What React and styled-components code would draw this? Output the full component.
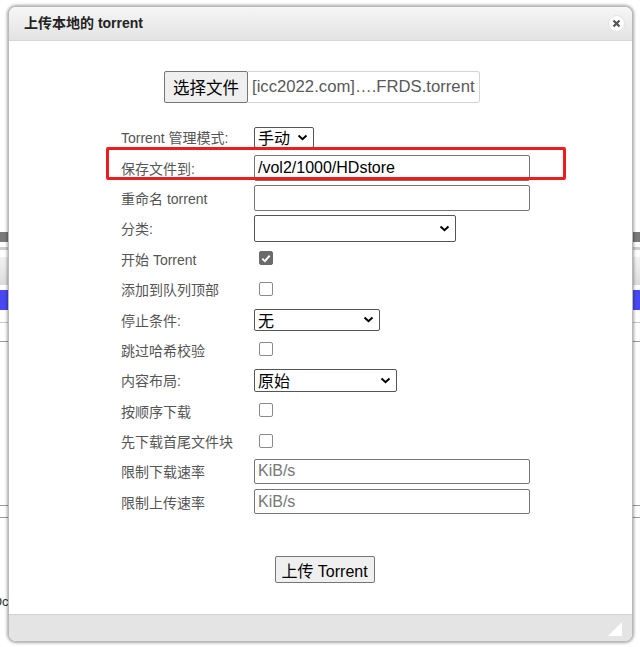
import React from 'react';
import styled, { createGlobalStyle } from 'styled-components';

const GlobalStyle = createGlobalStyle`
    html, body {
        margin: 0;
        padding: 0;
        background: #ffffff;
        overflow: hidden;
    }
    * { box-sizing: border-box; }
`;

const FONT = `"Liberation Sans", Arial, "Noto Sans CJK SC", sans-serif`;

// page behind the dialog
const Page = styled.div`
    position: relative;
    width: 640px;
    height: 647px;
    display: flex;
    flex-direction: column;
    background: #ffffff;
    font-family: ${FONT};`

const Bar = styled.div`
    height: ${p => p.h}px;
    margin-top: ${p => p.mt}px;
    background: ${p => p.bg};`

const BackText = styled.div`
    margin-top: ${p => p.mt}px;
    font-size: 13px;
    color: #333;
    padding-left: 0;
    margin-left: -8px;`

// dialog
const Dialog = styled.div`
    position: absolute;
    left: 8px;
    top: 6px;
    width: 625px;
    height: 636px;
    display: flex;
    flex-direction: column;
    background: #ffffff;
    border: 1px solid #b9b9b9;
    border-radius: 8px;
    box-shadow: 0 0 3px 1px rgba(0,0,0,0.35);
    overflow: hidden;`

const Header = styled.div`
    height: 34px;
    flex-shrink: 0;
    display: flex;
    align-items: center;
    justify-content: space-between;
    padding: 0 7px 3px 15px;
    background: linear-gradient(#f6f6f6, #e3e3e3);
    border-bottom: 1px solid #d6d6d6;`

const Title = styled.h3`
    margin: 0;
    font-size: 14px;
    font-weight: bold;
    color: #222;
    font-family: ${FONT};`

const Close = styled.div`
    width: 17px;
    height: 17px;
    margin-top: 3px;
    border-radius: 50%;
    background: #ffffff;
    border: 1px solid #e2e2e2;
    display: flex;
    align-items: center;
    justify-content: center;`

const Body = styled.div`
    flex: 1;
    display: flex;
    flex-direction: column;
    padding-top: 30px;`

const FileRow = styled.div`
    display: flex;
    justify-content: center;
    padding-left: 3px;`

const FileButton = styled.button`
    height: 32px;
    padding: 0 8px;
    font-size: 16.5px;
    font-family: ${FONT};
    color: #000;
    background: #efefef;
    border: 1px solid #767676;
    border-radius: 2px;
    white-space: nowrap;`

const FileName = styled.div`
    width: 232px;
    height: 32px;
    display: flex;
    align-items: center;
    padding: 0 4px;
    font-size: 16.7px;
    color: #595959;
    border: 1px solid #d4d4d4;
    border-left: 0;
    border-radius: 0 3px 3px 0;
    white-space: nowrap;
    overflow: hidden;`

const Form = styled.div`
    position: relative;
    margin: 19px 0 0 112px;
    display: grid;
    grid-template-columns: 133px auto;
    grid-auto-rows: 30.4px;
    align-items: center;`

const Label = styled.div`
    font-size: 14px;
    color: #555;
    white-space: nowrap;`

const Input = styled.div`
    width: ${p => p.w || 276}px;
    height: ${p => p.h || 26}px;
    display: flex;
    align-items: center;
    padding: 0 3px;
    font-size: 16px;
    color: ${p => (p.placeholder ? '#777' : '#000')};
    border: 1px solid #767676;
    border-radius: 2px;`

const Select = styled.div`
    width: ${p => p.w}px;
    height: ${p => p.h || 22}px;
    display: flex;
    align-items: center;
    justify-content: space-between;
    padding: 0 5px 0 3px;
    font-size: 16px;
    color: #000;
    border: 1px solid #555;
    border-radius: 2px;`

const Check = styled.div`
    width: 14px;
    height: 14px;
    margin-left: 5px;
    margin-top: -1px;
    border-radius: 2px;
    border: 1px solid ${p => (p.on ? '#6b6b6b' : '#8a8a8a')};
    background: ${p => (p.on ? '#6b6b6b' : '#fff')};
    display: flex;
    align-items: center;
    justify-content: center;`

const Highlight = styled.div`
    position: absolute;
    left: -15px;
    top: 25px;
    width: 460px;
    height: 33px;
    border: 3px solid #ee1d1d;
    border-radius: 2px;
    pointer-events: none;`

const Actions = styled.div`
    display: flex;
    justify-content: center;
    padding: 39px 0 0 8px;`

const Button = styled.button`
    width: 100px;
    height: 27px;
    padding: 0;
    font-size: 16px;
    font-family: ${FONT};
    color: #000;
    background: #efefef;
    border: 1px solid #767676;
    border-radius: 2px;
    white-space: nowrap;`

const Footer = styled.div`
    height: 27px;
    flex-shrink: 0;
    background: #e4e4e4;
    border-top: 1px solid #d2d2d2;
    display: flex;
    justify-content: flex-end;
    align-items: flex-end;
    padding: 0 10px 5px 0;`

const Chevron = () => (
    <svg width="11" height="7" viewBox="0 0 11 7">
        <path d="M1.5 1.5 L5.5 5.2 L9.5 1.5" fill="none" stroke="#000" strokeWidth="2" />
    </svg>
);

const Tick = () => (
    <svg width="10" height="9" viewBox="0 0 10 9">
        <path d="M1.3 4.6 L3.9 7.1 L8.7 1.6" fill="none" stroke="#fff" strokeWidth="2" />
    </svg>
);

const rows = [
    ['Torrent 管理模式:', <Select w={60} h={21}>手动<Chevron /></Select>],
    ['保存文件到:', <Input>/vol2/1000/HDstore</Input>],
    ['重命名 torrent', <Input />],
    ['分类:', <Select w={202} h={27}><span /><Chevron /></Select>],
    ['开始 Torrent', <Check on><Tick /></Check>],
    ['添加到队列顶部', <Check />],
    ['停止条件:', <Select w={126}>无<Chevron /></Select>],
    ['跳过哈希校验', <Check />],
    ['内容布局:', <Select w={143} h={23}>原始<Chevron /></Select>],
    ['按顺序下载', <Check />],
    ['先下载首尾文件块', <Check />],
    ['限制下载速率', <Input placeholder="1" h={25}>KiB/s</Input>],
    ['限制上传速率', <Input placeholder="1" h={25}>KiB/s</Input>],
];

const App = () => {
    return (
        <Page>
            <GlobalStyle />
            <Bar h={10} mt={232} bg="#7a7a7a" />
            <Bar h={3} mt={5} bg="#cfcfcf" />
            <Bar h={28} mt={7} bg="linear-gradient(#f2f2f2, #dcdcdc)" />
            <Bar h={20} mt={5} bg="#4848f0" />
            <Bar h={1} mt={12} bg="#c8c8c8" />
            <Bar h={1} mt={18} bg="#9a9a9a" />
            <Bar h={1} mt={163} bg="#9a9a9a" />
            <Bar h={1} mt={11} bg="#9a9a9a" />
            <BackText mt={76}>Oc</BackText>

            <Dialog>
                <Header>
                    <Title>上传本地的 torrent</Title>
                    <Close>
                        <svg width="9" height="9" viewBox="0 0 9 9">
                            <path d="M1.5 1.5 L7.5 7.5 M7.5 1.5 L1.5 7.5" stroke="#555" strokeWidth="2.2" />
                        </svg>
                    </Close>
                </Header>
                <Body>
                    <FileRow>
                        <FileButton>选择文件</FileButton>
                        <FileName>[icc2022.com]….FRDS.torrent</FileName>
                    </FileRow>
                    <Form>
                        {rows.map(([label, control], i) => (
                            <React.Fragment key={i}>
                                <Label>{label}</Label>
                                <div>{control}</div>
                            </React.Fragment>
                        ))}
                        <Highlight />
                    </Form>
                    <Actions>
                        <Button>上传 Torrent</Button>
                    </Actions>
                </Body>
                <Footer>
                    <svg width="14" height="14" viewBox="0 0 14 14">
                        <path d="M14 0 L14 14 L0 14 Z" fill="#ffffff" />
                    </svg>
                </Footer>
            </Dialog>
        </Page>
    );
}

export default App;
